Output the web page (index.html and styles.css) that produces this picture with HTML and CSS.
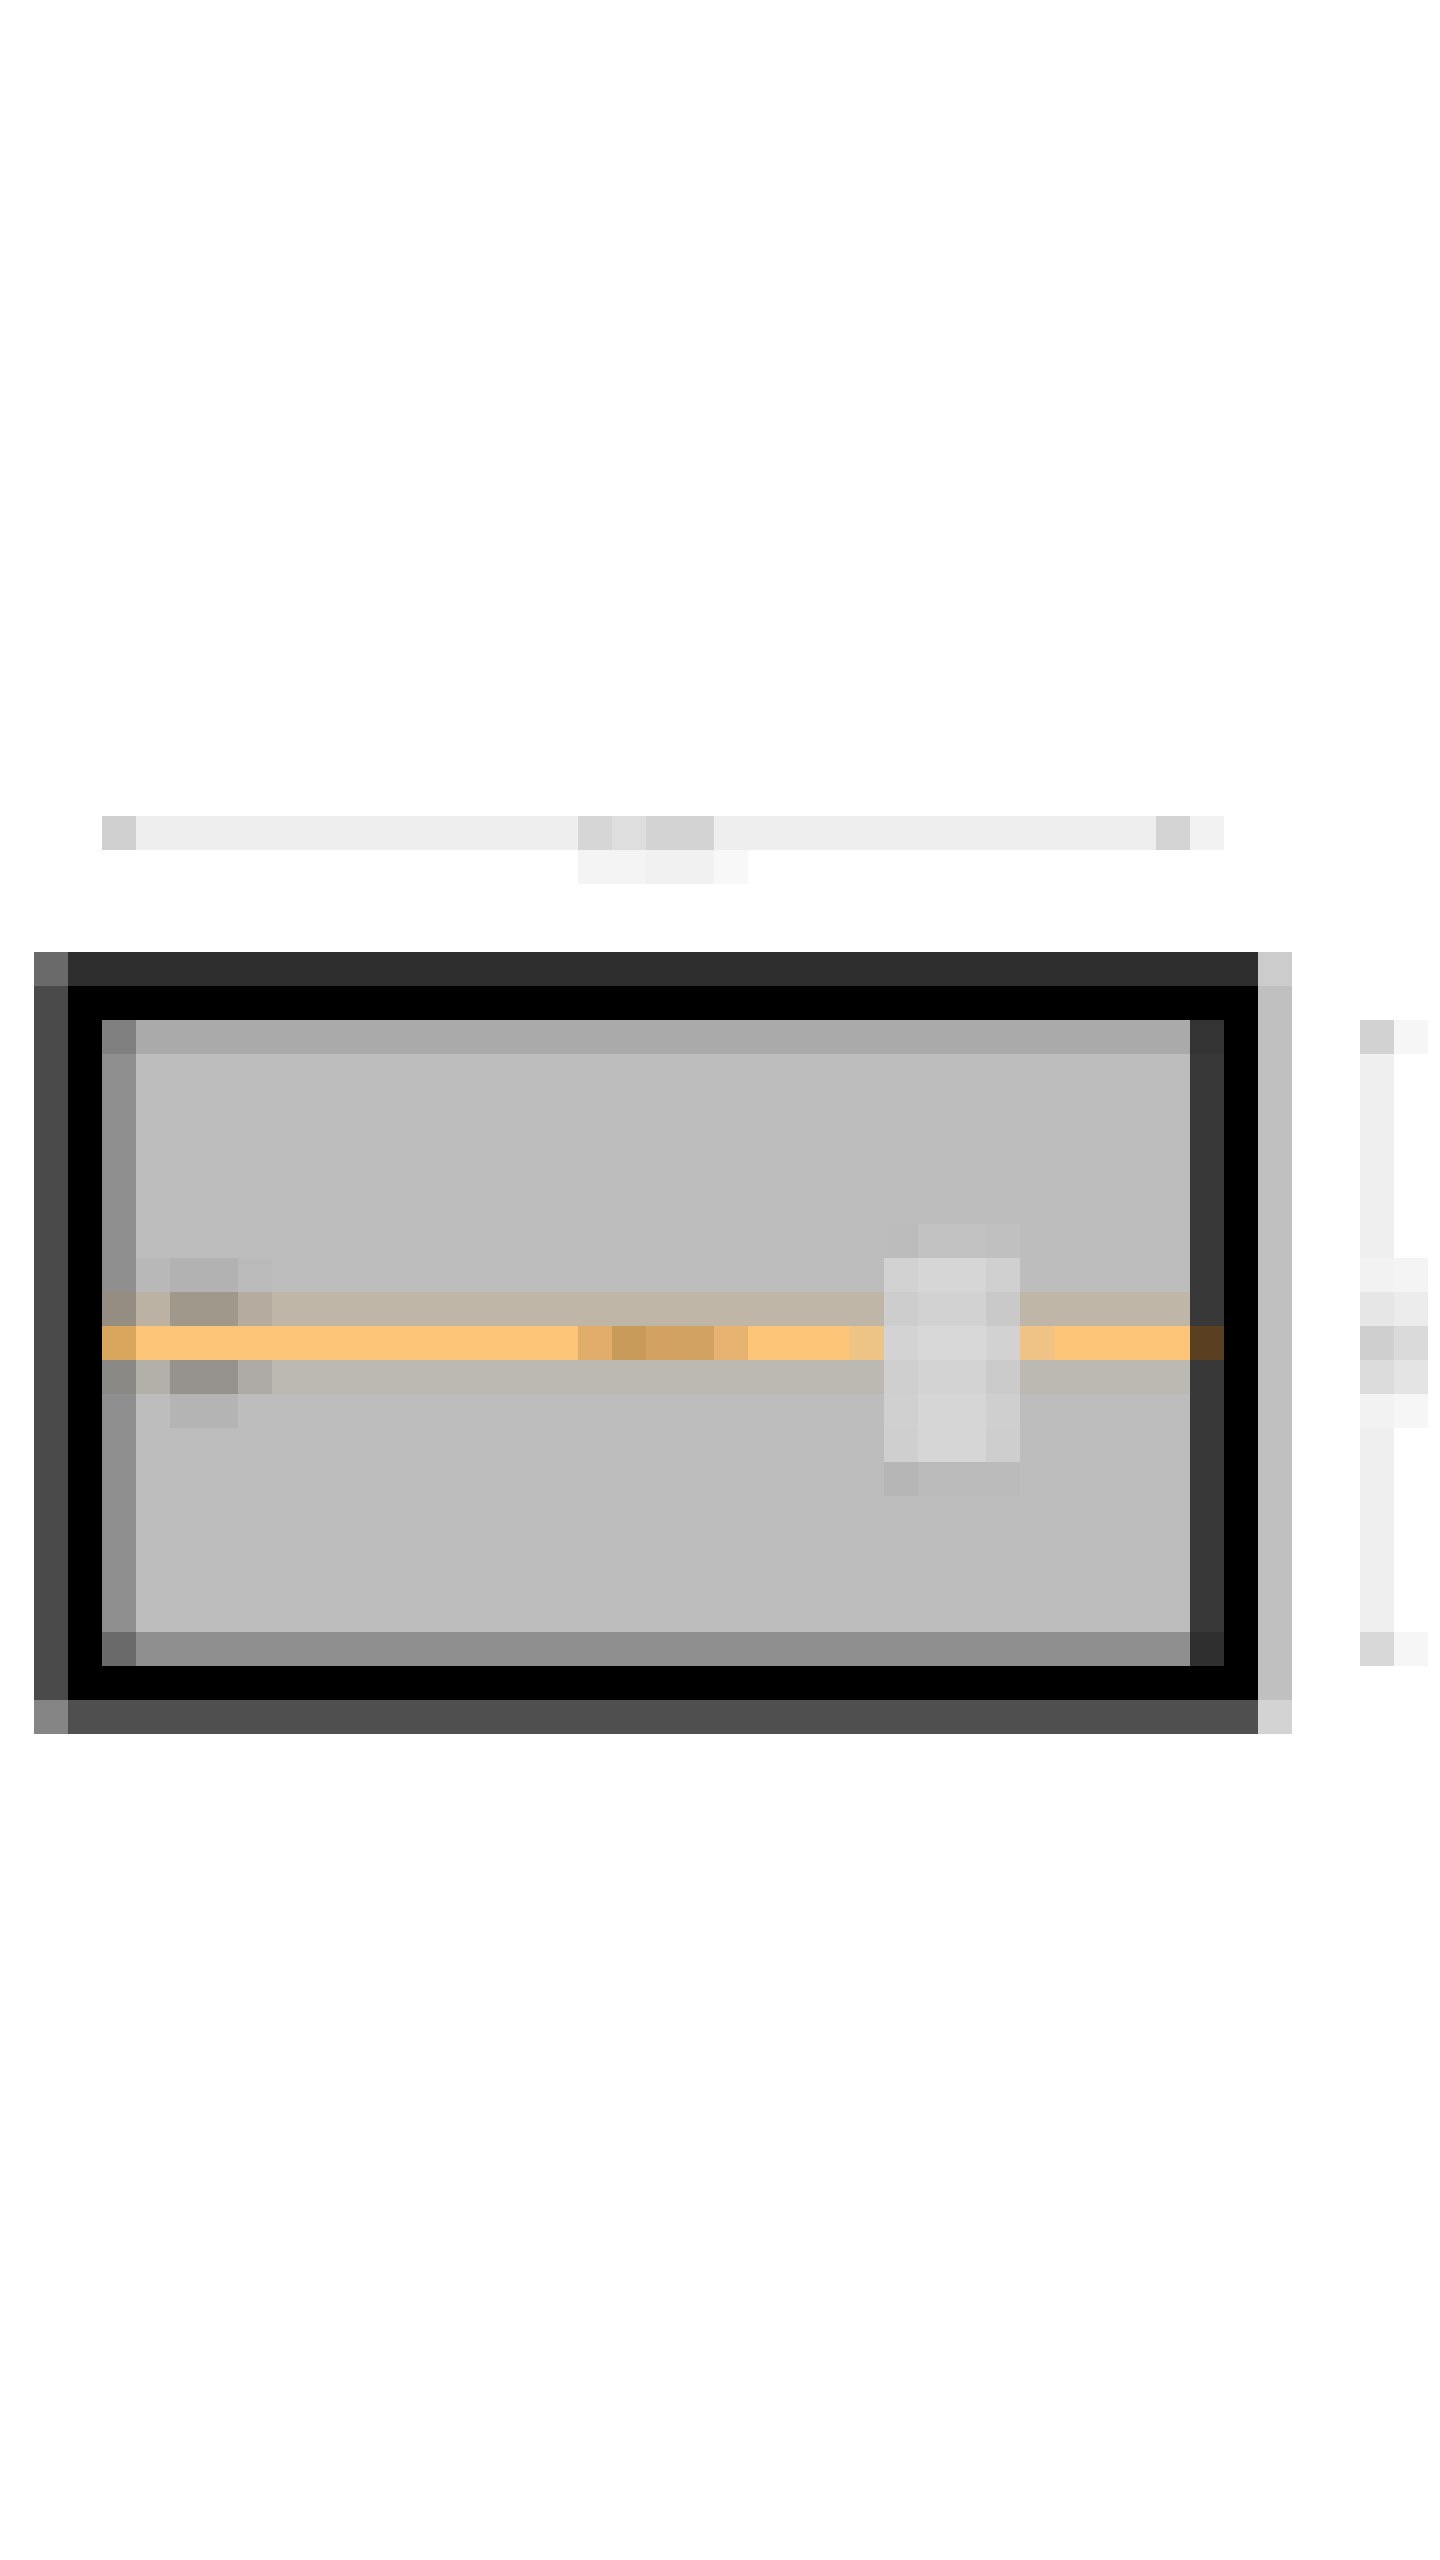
FILE: index.html
```html
<!DOCTYPE html>
<html lang="en">
<head>
<meta charset="utf-8">
<title>Player</title>
<link rel="stylesheet" href="styles.css">
</head>
<body>
<main class="canvas">
  <div class="title">
    <span class="t-cap-l"></span>
    <span class="t-run"></span>
    <span class="t-m1"></span>
    <span class="t-m2"></span>
    <span class="t-m3"></span>
    <span class="t-run"></span>
    <span class="t-cap-r1"></span>
    <span class="t-cap-r2"></span>
  </div>
  <div class="title-shadow">
    <span class="ts-a"></span>
    <span class="ts-b"></span>
    <span class="ts-c"></span>
  </div>

  <section class="frame">
    <div class="f-tl"></div>
    <div class="f-top"></div>
    <div class="f-tr"></div>
    <div class="f-left"></div>
    <div class="screen">
      <div class="panel">
        <div class="p-tl"></div>
        <div class="p-top"></div>
        <div class="p-tr"></div>
        <div class="p-left"></div>
        <div class="p-fill"></div>
        <div class="p-right"></div>
        <div class="p-bl"></div>
        <div class="p-bottom"></div>
        <div class="p-br"></div>

        <div class="track-glow"></div>
        <div class="track-shade"></div>
        <div class="marker">
          <span class="mk-a"></span>
          <span class="mk-b"></span>
          <span class="mk-c"></span>
        </div>
        <div class="track">
          <span class="tr-cap-l"></span>
          <span class="tr-run w13"></span>
          <span class="tr-m1"></span>
          <span class="tr-m2"></span>
          <span class="tr-m3"></span>
          <span class="tr-m4"></span>
          <span class="tr-m5"></span>
          <span class="tr-run w3"></span>
          <span class="tr-near-l"></span>
          <span class="tr-under w4"></span>
          <span class="tr-near-r"></span>
          <span class="tr-run w4"></span>
          <span class="tr-cap-r"></span>
        </div>
        <div class="thumb">
          <span class="th-a"></span>
          <span class="th-b"></span>
          <span class="th-c"></span>
        </div>
      </div>
    </div>
    <div class="f-right"></div>
    <div class="f-bl"></div>
    <div class="f-bottom"></div>
    <div class="f-br"></div>
  </section>

  <aside class="scrollbar">
    <span class="sb-a"></span>
    <span class="sb-b"></span>
  </aside>
</main>
</body>
</html>
```

FILE: styles.css
```css
* { box-sizing: border-box; }
html, body { margin: 0; padding: 0; background: #ffffff; }
body { font-family: "Liberation Sans", Arial, sans-serif; }

.canvas {
  display: grid;
  grid-template-columns: repeat(42, 34px);
  grid-template-rows: repeat(75, 34px);
  width: 1440px;
  height: 2560px;
}

/* ---------- title bar ---------- */
.title {
  grid-column: 4 / 37;
  grid-row: 25 / 26;
  display: flex;
}
.title span, .title-shadow span, .track span { display: block; height: 34px; width: 34px; flex: none; }
.t-cap-l { background: #d0d0d0; }
.title .t-run { width: 442px; background: #eeeeee; }
.t-m1 { background: #d6d6d6; }
.t-m2 { background: #dedede; }
.title .t-m3 { width: 68px; background: #d3d3d3; }
.t-cap-r1 { background: #d4d4d4; }
.t-cap-r2 { background: #f2f2f2; }

.title-shadow {
  grid-column: 18 / 23;
  grid-row: 26 / 27;
  display: flex;
}
.title-shadow .ts-a { width: 68px; background: #f4f4f4; }
.title-shadow .ts-b { width: 68px; background: #f1f1f1; }
.ts-c { background: #f8f8f8; }

/* ---------- frame ---------- */
.frame {
  grid-column: 2 / 39;
  grid-row: 29 / 52;
  display: grid;
  grid-template-columns: 34px 1190px 34px;
  grid-template-rows: 34px 714px 34px;
}
.f-tl { background: #6a6a6a; }
.f-top { background: #2e2e2e; }
.f-tr { background: #cccccc; }
.f-left { background: #4a4a4a; }
.f-right { background: #c0c0c0; }
.f-bl { background: #858585; }
.f-bottom { background: #4f4f4f; }
.f-br { background: #d3d3d3; }

.screen {
  background: #000000;
  padding: 34px;
}

.panel {
  display: grid;
  grid-template-columns: repeat(33, 34px);
  grid-template-rows: repeat(19, 34px);
}
.p-tl { grid-column: 1 / 2; grid-row: 1 / 2; background: #808080; }
.p-top { grid-column: 2 / 33; grid-row: 1 / 2; background: #aaaaaa; }
.p-tr { grid-column: 33 / 34; grid-row: 1 / 2; background: #333333; }
.p-left { grid-column: 1 / 2; grid-row: 2 / 19; background: #8f8f8f; }
.p-fill { grid-column: 2 / 33; grid-row: 2 / 19; background: #bdbdbd; }
.p-right { grid-column: 33 / 34; grid-row: 2 / 19; background: #383838; }
.p-bl { grid-column: 1 / 2; grid-row: 19 / 20; background: #6a6a6a; }
.p-bottom { grid-column: 2 / 33; grid-row: 19 / 20; background: #8f8f8f; }
.p-br { grid-column: 33 / 34; grid-row: 19 / 20; background: #2f2f2f; }

/* ---------- slider ---------- */
.track-glow {
  grid-column: 1 / 33;
  grid-row: 9 / 10;
  background: linear-gradient(to right, #968d82 0 34px, #c0b6a7 34px);
}
.track-shade {
  grid-column: 1 / 33;
  grid-row: 11 / 12;
  background: linear-gradient(to right, #8b8986 0 34px, #bcb8b2 34px);
}

.marker {
  grid-column: 2 / 6;
  grid-row: 8 / 13;
  display: flex;
}
.marker span { display: block; height: 170px; width: 34px; }
.mk-a {
  background: linear-gradient(#b8b8b8 0 34px, #bcb2a3 34px 68px, #fbc476 68px 102px, #b3afa9 102px 136px, #bdbdbd 136px);
}
.marker .mk-b {
  width: 68px;
  background: linear-gradient(#b2b2b2 0 34px, #a1988c 34px 68px, #fbc476 68px 102px, #96938e 102px 136px, #b4b4b4 136px);
}
.mk-c {
  background: linear-gradient(#bababa 0 34px, #b5ab9e 34px 68px, #fbc476 68px 102px, #aeaaa5 102px 136px, #bdbdbd 136px);
}

.track {
  grid-column: 1 / 34;
  grid-row: 10 / 11;
  display: flex;
}
.tr-cap-l { background: #d9a65e; }
.track .tr-run { background: #fbc476; }
.track .w13 { width: 442px; }
.track .w3 { width: 102px; }
.track .w4 { width: 136px; }
.tr-m1 { background: #e0ae6a; }
.tr-m2 { background: #c99b5b; }
.tr-m3 { background: #d3a263; }
.tr-m4 { background: #d1a262; }
.tr-m5 { background: #e6b371; }
.tr-near-l { background: #eec386; }
.track .tr-under { background: #d6d6d6; }
.tr-near-r { background: #efc386; }
.tr-cap-r { background: #5a4020; }

.thumb {
  grid-column: 24 / 28;
  grid-row: 7 / 15;
  display: flex;
}
.thumb span { display: block; width: 34px; height: 272px; }
.th-a {
  background: linear-gradient(#bcbcbc 0 34px, #d2d2d2 34px 68px, #cdcdcd 68px 102px, #d3d3d3 102px 136px, #cfcfcf 136px 170px, #d0d0d0 170px 204px, #cfcfcf 204px 238px, #b6b6b6 238px);
}
.thumb .th-b {
  width: 68px;
  background: linear-gradient(#c2c2c2 0 34px, #d6d6d6 34px 68px, #d2d2d2 68px 102px, #d8d8d8 102px 136px, #d3d3d3 136px 170px, #d6d6d6 170px 238px, #bababa 238px);
}
.th-c {
  background: linear-gradient(#c0c0c0 0 34px, #d0d0d0 34px 68px, #c9c9c9 68px 102px, #d2d2d2 102px 136px, #cbcbcb 136px 170px, #cfcfcf 170px 204px, #cecece 204px 238px, #bbbbbb 238px);
}

/* ---------- scrollbar ---------- */
.scrollbar {
  grid-column: 41 / 43;
  grid-row: 31 / 50;
  display: flex;
}
.scrollbar span { display: block; width: 34px; height: 646px; }
.sb-a {
  background: linear-gradient(#d2d2d2 0 34px, #efefef 34px 238px, #f2f2f2 238px 272px, #e6e6e6 272px 306px, #cfcfcf 306px 340px, #dcdcdc 340px 374px, #f2f2f2 374px 408px, #efefef 408px 612px, #d8d8d8 612px);
}
.sb-b {
  background: linear-gradient(#f6f6f6 0 34px, #ffffff 34px 238px, #f4f4f4 238px 272px, #ececec 272px 306px, #dadada 306px 340px, #e4e4e4 340px 374px, #f6f6f6 374px 408px, #ffffff 408px 612px, #f6f6f6 612px);
}
```
